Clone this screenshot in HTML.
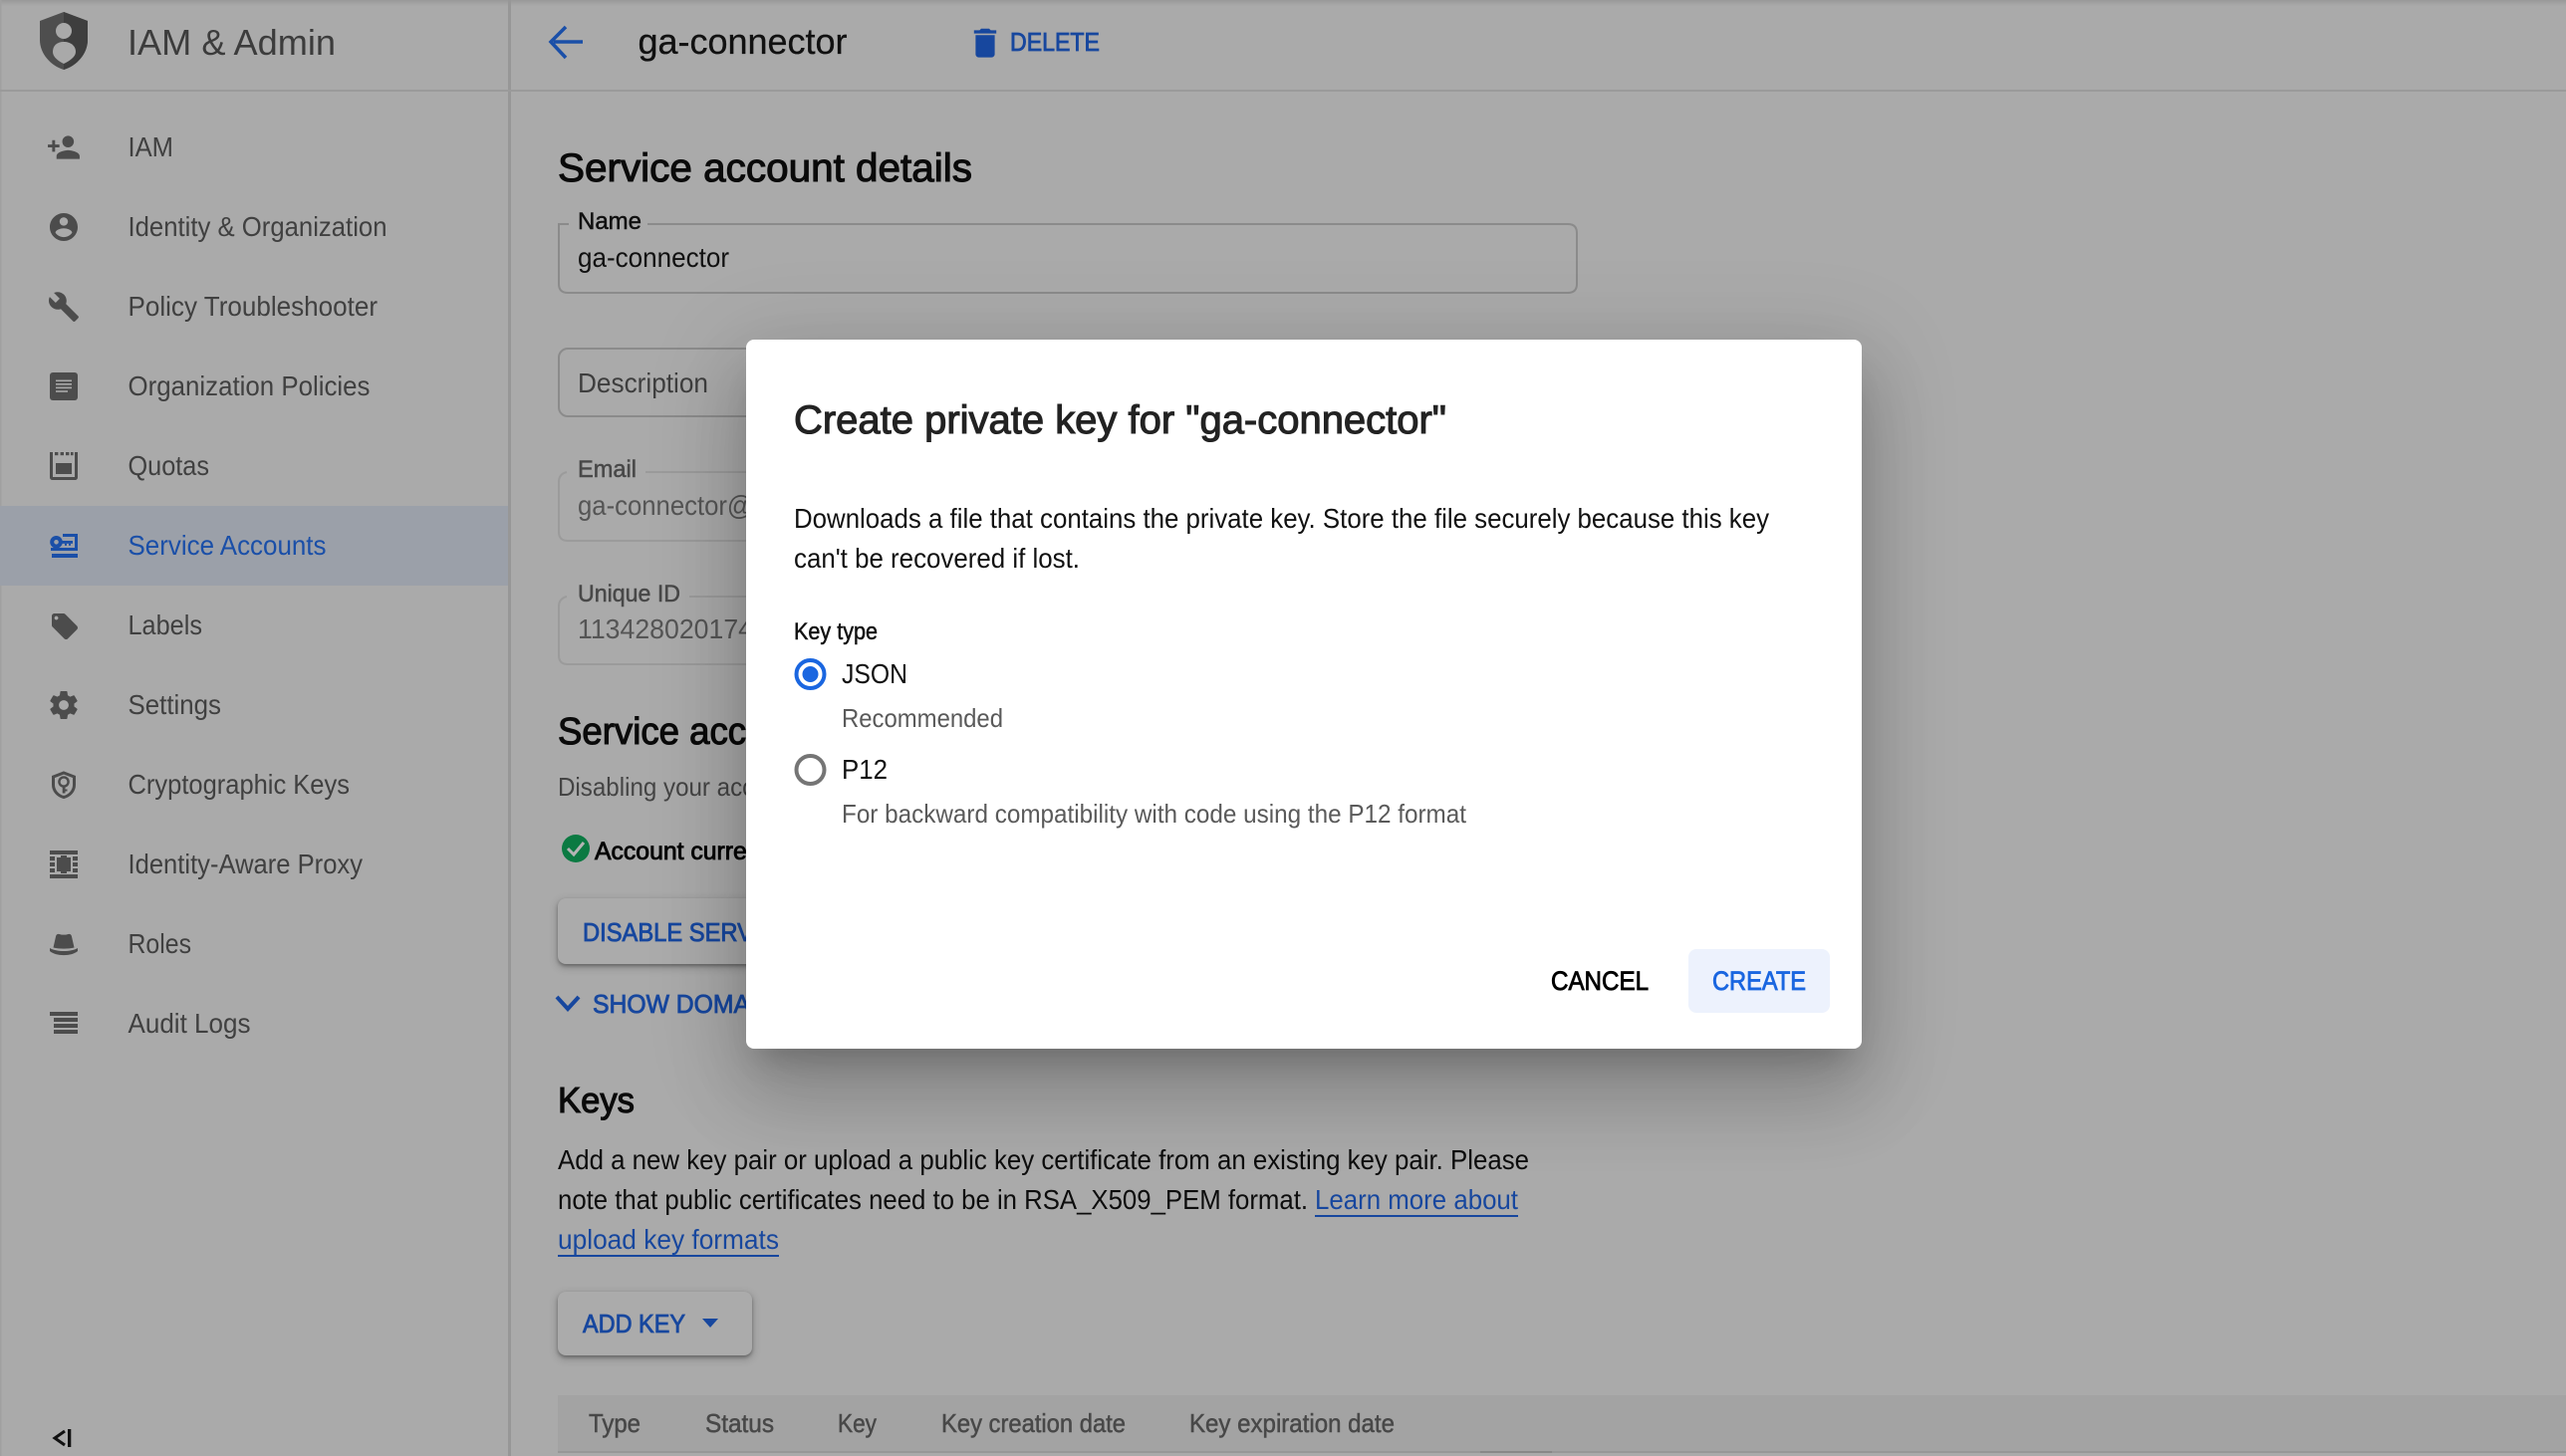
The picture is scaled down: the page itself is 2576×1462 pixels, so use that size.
<!DOCTYPE html>
<html lang="en"><head><meta charset="utf-8"><title>IAM &amp; Admin</title>
<style>
html,body{margin:0;padding:0;width:2576px;height:1462px;overflow:hidden;background:#aaaaaa}
#root{position:relative;width:2576px;height:1462px;overflow:hidden;background:#aaaaaa}
svg{position:absolute;left:0;top:0}
text{font-family:"Liberation Sans",sans-serif;white-space:pre}
.m{stroke-width:.85px;paint-order:stroke}
.l{stroke-width:.5px;paint-order:stroke}
.btn{position:absolute;background:#ababab;border-radius:8px;box-shadow:0 2px 3px rgba(0,0,0,.3),0 3px 8px 2px rgba(0,0,0,.15)}
#dlg{position:absolute;left:749px;top:341px;width:1120px;height:712px;background:#fff;border-radius:8px;box-shadow:0 22px 30px -14px rgba(0,0,0,.2),0 48px 76px 6px rgba(0,0,0,.14),0 18px 92px 16px rgba(0,0,0,.12)}
#create{position:absolute;left:1695px;top:953px;width:142px;height:64px;background:#edf2fd;border-radius:8px}
#top{position:absolute;left:0;top:0;width:2576px;height:6px;background:linear-gradient(#999,#aaa)}
</style></head><body><div id="root">
<div id="top"></div>
<div class="btn" style="left:560px;top:902px;width:400px;height:66px"></div>
<div class="btn" style="left:560px;top:1297px;width:195px;height:64px"></div>
<svg width="2576" height="1462" viewBox="0 0 2576 1462">
<!-- structure -->
<rect x="0" y="0" width="1.5" height="1462" fill="#a0a0a0"/>
<rect x="0" y="508" width="510" height="80" fill="#9ba0a9"/>
<rect x="510" y="0" width="3" height="1462" fill="#979797"/>
<rect x="0" y="90" width="2576" height="2" fill="#9a9a9a"/>

<!-- logo -->
<path d="M64 12L88 21V40C88 54 77 66 64 70C51 66 40 54 40 40V21Z" fill="#4e4e4e"/>
<path d="M64 12L88 21V40C88 54 77 66 64 70Z" fill="#3e3e3e"/>
<circle cx="64" cy="31" r="8" fill="#a9a9a9"/>
<path d="M64 42C71 42 76 46 76 52C76 57 70 61 64 64C58 61 53 57 53 52C53 46 57 42 64 42Z" fill="#a9a9a9"/>
<text x="128" y="55" font-size="36" fill="#3c3c3c" textLength="209" lengthAdjust="spacingAndGlyphs">IAM &amp; Admin</text>

<!-- nav text -->
<g font-size="28" fill="#404040">
<text x="128.500" y="157" textLength="45.500" lengthAdjust="spacingAndGlyphs">IAM</text>
<text x="128.500" y="237" textLength="260" lengthAdjust="spacingAndGlyphs">Identity &amp; Organization</text>
<text x="128.500" y="317" textLength="250.500" lengthAdjust="spacingAndGlyphs">Policy Troubleshooter</text>
<text x="128.500" y="397" textLength="243" lengthAdjust="spacingAndGlyphs">Organization Policies</text>
<text x="128.500" y="477" textLength="81.500" lengthAdjust="spacingAndGlyphs">Quotas</text>
<text x="128.500" y="557" textLength="199" lengthAdjust="spacingAndGlyphs" fill="#1a4fa8">Service Accounts</text>
<text x="128.500" y="637" textLength="74.500" lengthAdjust="spacingAndGlyphs">Labels</text>
<text x="128.500" y="717" textLength="93.500" lengthAdjust="spacingAndGlyphs">Settings</text>
<text x="128.500" y="797" textLength="222.500" lengthAdjust="spacingAndGlyphs">Cryptographic Keys</text>
<text x="128.500" y="877" textLength="235.500" lengthAdjust="spacingAndGlyphs">Identity-Aware Proxy</text>
<text x="128.500" y="957" textLength="63.500" lengthAdjust="spacingAndGlyphs">Roles</text>
<text x="128.500" y="1037" textLength="123" lengthAdjust="spacingAndGlyphs">Audit Logs</text>
</g>

<!-- nav icons -->
<g fill="#4c4c4c">
<path transform="translate(46.6 130.6) scale(1.45)" d="M15 12c2.21 0 4-1.79 4-4s-1.79-4-4-4-4 1.79-4 4 1.79 4 4 4zm-9-2V7H4v3H1v2h3v3h2v-3h3v-2H6zm9 4c-2.67 0-8 1.34-8 4v2h16v-2c0-2.66-5.33-4-8-4z"/>
<path transform="translate(47.2 211.2) scale(1.4)" d="M12 2C6.48 2 2 6.48 2 12s4.48 10 10 10 10-4.48 10-10S17.52 2 12 2zm0 3c1.66 0 3 1.34 3 3s-1.34 3-3 3-3-1.34-3-3 1.34-3 3-3zm0 14.2c-2.5 0-4.71-1.28-6-3.22.03-1.99 4-3.08 6-3.08 1.99 0 5.97 1.09 6 3.08-1.29 1.94-3.5 3.22-6 3.22z"/>
<path transform="translate(47.7 291.7) scale(1.36)" d="M22.7 19l-9.1-9.1c.9-2.3.4-5-1.5-6.9-2-2-5-2.4-7.4-1.3L9 6 6 9 1.6 4.7C.4 7.1.9 10.1 2.9 12.1c1.9 1.9 4.6 2.4 6.9 1.5l9.1 9.1c.4.4 1 .4 1.4 0l2.3-2.3c.5-.4.5-1.1.1-1.4z"/>
<!-- org policies -->
<rect x="50" y="374" width="28" height="28" rx="3"/>
<g fill="#a9a9a9"><rect x="56" y="381.5" width="16" height="1.6"/><rect x="56" y="385" width="16" height="1.6"/><rect x="56" y="388.6" width="16" height="1.6"/><rect x="56" y="392.2" width="12" height="1.6"/></g>
<!-- quotas -->
<path fill-rule="evenodd" d="M50 454H53V479H75V454H78V479C78 481 77 482 75 482H53C51 482 50 481 50 479Z"/>
<rect x="55" y="454" width="3.4" height="3.2"/><rect x="60.6" y="454" width="3.4" height="3.2"/><rect x="66" y="454" width="3.4" height="3.2"/><rect x="71" y="454" width="2.6" height="3.2"/>
<rect x="56" y="465" width="16" height="11"/>
<!-- labels -->
<path transform="translate(49.4 613.4) scale(1.3)" d="M21.41 11.58l-9-9C12.05 2.22 11.55 2 11 2H4c-1.1 0-2 .9-2 2v7c0 .55.22 1.05.59 1.42l9 9c.36.36.86.58 1.41.58s1.05-.22 1.41-.59l7-7c.37-.36.59-.86.59-1.41s-.23-1.06-.59-1.42zM5.5 7C4.67 7 4 6.33 4 5.5S4.67 4 5.5 4 7 4.67 7 5.5 6.33 7 5.5 7z"/>
<!-- settings -->
<path transform="translate(47.2 691.2) scale(1.4)" d="M19.43 12.98c.04-.32.07-.64.07-.98s-.03-.66-.07-.98l2.11-1.65c.19-.15.24-.42.12-.64l-2-3.46c-.12-.22-.39-.3-.61-.22l-2.49 1c-.52-.4-1.08-.73-1.69-.98l-.38-2.65C14.46 2.18 14.25 2 14 2h-4c-.25 0-.46.18-.49.42l-.38 2.65c-.61.25-1.17.59-1.69.98l-2.49-1c-.23-.09-.49 0-.61.22l-2 3.46c-.13.22-.07.49.12.64l2.11 1.65c-.04.32-.07.65-.07.98s.03.66.07.98l-2.11 1.65c-.19.15-.24.42-.12.64l2 3.46c.12.22.39.3.61.22l2.49-1c.52.4 1.08.73 1.69.98l.38 2.65c.03.24.24.42.49.42h4c.25 0 .46-.18.49-.42l.38-2.65c.61-.25 1.17-.59 1.69-.98l2.49 1c.23.09.49 0 .61-.22l2-3.46c.12-.22.07-.49-.12-.64l-2.11-1.65zM12 15.5c-1.93 0-3.5-1.57-3.5-3.5s1.57-3.5 3.5-3.5 3.5 1.57 3.5 3.5-1.57 3.5-3.5 3.5z"/>
<!-- crypto -->
<path d="M64 776L74.5 780V788C74.5 794 70 799 64 800.5C58 799 53.500 794 53.500 788V780Z" fill="none" stroke="#4c4c4c" stroke-width="3"/>
<circle cx="64" cy="785" r="4.6" fill="none" stroke="#4c4c4c" stroke-width="2.400"/>
<rect x="62.7" y="789" width="2.8" height="7.500"/><rect x="65" y="792.500" width="2.500" height="2"/>
<!-- IAP -->
<rect x="50" y="854" width="28" height="4"/><rect x="50" y="878" width="28" height="4"/>
<rect x="50" y="860" width="5" height="4.200"/><rect x="73" y="860" width="5" height="4.200"/>
<rect x="50" y="866" width="5" height="4"/><rect x="73" y="866" width="5" height="4"/>
<rect x="50" y="872" width="5" height="4"/><rect x="73" y="872" width="5" height="4"/>
<rect x="57" y="861" width="14" height="14"/><rect x="61" y="859" width="6" height="18"/>
<!-- roles -->
<path d="M53.500 951.500L56 940.500C56.500 938 58 937.500 60.500 938.200C62.500 938.800 65.500 938.800 67.500 938.200C70 937.500 71.500 938 72 940.500L74.500 951.500C68 953 60 953 53.500 951.500Z"/>
<path d="M50 952C57 956 71 956 78 952V955C72 960.500 56 960.500 50 955Z"/>
<!-- audit -->
<rect x="50" y="1016" width="28" height="4"/><rect x="54" y="1022" width="24" height="4"/><rect x="54" y="1028" width="24" height="4"/><rect x="54" y="1034" width="24" height="4"/>
</g>
<!-- service accounts icon -->
<g fill="#1a4fa8">
<path fill-rule="evenodd" d="M56.500 538a6.300 6.300 0 1 0 0 12.600a6.300 6.300 0 0 0 0-12.600zm0 4a2.300 2.300 0 1 1 0 4.600a2.300 2.300 0 0 1 0-4.600z"/>
<rect x="63" y="536" width="15" height="3"/><rect x="75" y="536" width="3" height="17"/><rect x="51" y="550" width="27" height="3"/>
<rect x="62" y="543" width="11" height="2.800"/><rect x="65" y="545.800" width="2" height="2"/><rect x="69" y="545.800" width="2" height="2"/>
<rect x="52" y="556" width="26" height="4"/>
</g>
<!-- collapse -->
<path d="M65 1437L55 1444L65 1451" fill="none" stroke="#111" stroke-width="3"/>
<rect x="68" y="1435" width="3.300" height="18" fill="#111"/>

<!-- header -->
<path d="M585 42H556M568 27L553 42L568 58" fill="none" stroke="#1a4fa8" stroke-width="3.500"/>
<text x="640.500" y="54" font-size="36" fill="#111" textLength="210" lengthAdjust="spacingAndGlyphs" class="l" stroke="#111" style="stroke-width:.3px">ga-connector</text>
<path transform="translate(969.800 24) scale(1.6)" fill="#17479e" d="M6 19c0 1.100.9 2 2 2h8c1.100 0 2-.9 2-2V7H6v12zM19 4h-3.500l-1-1h-5l-1 1H5v2h14V4z"/>
<text class="m" x="1014" y="51" font-size="26" fill="#17479e" stroke="#17479e" textLength="90" lengthAdjust="spacingAndGlyphs">DELETE</text>

<!-- details -->
<text class="m" x="560" y="182" font-size="40" fill="#0a0a0a" stroke="#0a0a0a" textLength="416" lengthAdjust="spacingAndGlyphs" style="stroke-width:1.1px">Service account details</text>
<path d="M571 225H561V285Q561 294 570 294H1574Q1583 294 1583 285V234Q1583 225 1574 225H650" fill="none" stroke="#8b8b8b" stroke-width="2"/>
<text class="l" x="580" y="230" font-size="24" fill="#111" stroke="#111" textLength="64" lengthAdjust="spacingAndGlyphs">Name</text>
<text x="580" y="268" font-size="28" fill="#111" textLength="152" lengthAdjust="spacingAndGlyphs">ga-connector</text>

<rect x="561" y="350" width="400" height="68" rx="9" fill="none" stroke="#8b8b8b" stroke-width="2"/>
<text x="580" y="394" font-size="28" fill="#3e3e3e" textLength="131" lengthAdjust="spacingAndGlyphs">Description</text>

<path d="M569 474Q561 476 561 484V534Q561 543 570 543H960M648 474H960" fill="none" stroke="#9b9b9b" stroke-width="2"/>
<text class="l" x="580" y="479" font-size="24" fill="#484848" stroke="#484848" textLength="59" lengthAdjust="spacingAndGlyphs">Email</text>
<text x="580" y="517" font-size="28" fill="#555" textLength="176" lengthAdjust="spacingAndGlyphs">ga-connector@</text>

<path d="M569 599Q561 601 561 609V658Q561 667 570 667H960M692 599H960" fill="none" stroke="#9b9b9b" stroke-width="2"/>
<text class="l" x="580" y="604" font-size="24" fill="#484848" stroke="#484848" textLength="103" lengthAdjust="spacingAndGlyphs">Unique ID</text>
<text x="580" y="641" font-size="28" fill="#555" textLength="176" lengthAdjust="spacingAndGlyphs">113428020174</text>

<text class="m" x="560" y="747" font-size="38" fill="#0a0a0a" stroke="#0a0a0a" textLength="368" lengthAdjust="spacingAndGlyphs" style="stroke-width:1.1px">Service account status</text>
<text x="560" y="799" font-size="26" fill="#444" textLength="318" lengthAdjust="spacingAndGlyphs">Disabling your account allows</text>
<circle cx="578" cy="852" r="14" fill="#0b7a42"/>
<path d="M570 852L576 858L586 846" fill="none" stroke="#b4b4b4" stroke-width="3"/>
<text class="m" x="597" y="863" font-size="25" fill="#050505" stroke="#050505" textLength="263" lengthAdjust="spacingAndGlyphs">Account currently active</text>
<text class="m" x="585" y="945" font-size="26" fill="#17479e" stroke="#17479e" textLength="333" lengthAdjust="spacingAndGlyphs">DISABLE SERVICE ACCOUNT</text>
<path d="M559 1001L570 1013L581 1001" fill="none" stroke="#17479e" stroke-width="4"/>
<text class="m" x="595" y="1017" font-size="26" fill="#17479e" stroke="#17479e" textLength="420" lengthAdjust="spacingAndGlyphs">SHOW DOMAIN-WIDE DELEGATION</text>

<text class="m" x="560" y="1117" font-size="36" fill="#0a0a0a" stroke="#0a0a0a" textLength="77" lengthAdjust="spacingAndGlyphs" style="stroke-width:1.1px">Keys</text>
<g font-size="28" fill="#0d0d0d">
<text x="560" y="1174" textLength="975" lengthAdjust="spacingAndGlyphs">Add a new key pair or upload a public key certificate from an existing key pair. Please</text>
<text x="560" y="1214" textLength="753" lengthAdjust="spacingAndGlyphs">note that public certificates need to be in RSA_X509_PEM format.</text>
<text x="1320" y="1214" textLength="204" lengthAdjust="spacingAndGlyphs" fill="#17479e">Learn more about</text>
<text x="560" y="1254" textLength="222" lengthAdjust="spacingAndGlyphs" fill="#17479e">upload key formats</text>
</g>
<rect x="1320" y="1220" width="204" height="2" fill="#17479e"/>
<rect x="560" y="1260" width="222" height="2" fill="#17479e"/>

<text class="m" x="585" y="1338" font-size="26" fill="#17479e" stroke="#17479e" textLength="103" lengthAdjust="spacingAndGlyphs">ADD KEY</text>
<path d="M705 1324H721L713 1333Z" fill="#17479e"/>

<rect x="560" y="1401" width="2016" height="56" fill="#a3a3a3"/>
<rect x="560" y="1457" width="2016" height="2" fill="#979797"/>
<rect x="1486" y="1457" width="72" height="2" fill="#888"/>
<g font-size="26" fill="#484848" stroke="#484848" class="l">
<text x="591" y="1438" textLength="52" lengthAdjust="spacingAndGlyphs">Type</text>
<text x="708" y="1438" textLength="69" lengthAdjust="spacingAndGlyphs">Status</text>
<text x="841" y="1438" textLength="39" lengthAdjust="spacingAndGlyphs">Key</text>
<text x="945" y="1438" textLength="185" lengthAdjust="spacingAndGlyphs">Key creation date</text>
<text x="1194" y="1438" textLength="206" lengthAdjust="spacingAndGlyphs">Key expiration date</text>
</g>
</svg>

<div id="dlg"></div>
<div id="create"></div>
<svg width="2576" height="1462" viewBox="0 0 2576 1462">
<text class="m" x="797" y="435" font-size="40" fill="#222" stroke="#222" textLength="655" lengthAdjust="spacingAndGlyphs" style="stroke-width:1.1px">Create private key for "ga-connector"</text>
<text x="797" y="530" font-size="28" fill="#111" textLength="979" lengthAdjust="spacingAndGlyphs">Downloads a file that contains the private key. Store the file securely because this key</text>
<text x="797" y="570" font-size="28" fill="#111" textLength="287" lengthAdjust="spacingAndGlyphs">can't be recovered if lost.</text>
<text class="l" x="797" y="642" font-size="24" fill="#111" stroke="#111" textLength="84" lengthAdjust="spacingAndGlyphs">Key type</text>
<circle cx="813.500" cy="677" r="14" fill="none" stroke="#1a66e0" stroke-width="4"/>
<circle cx="813.500" cy="677" r="8" fill="#1a66e0"/>
<text x="845" y="686" font-size="28" fill="#111" textLength="66" lengthAdjust="spacingAndGlyphs">JSON</text>
<text x="845" y="730" font-size="26" fill="#5a5a5a" textLength="162" lengthAdjust="spacingAndGlyphs">Recommended</text>
<circle cx="813.500" cy="773" r="14" fill="none" stroke="#757575" stroke-width="4"/>
<text x="845" y="782" font-size="28" fill="#111" textLength="46" lengthAdjust="spacingAndGlyphs">P12</text>
<text x="845" y="826" font-size="26" fill="#5a5a5a" textLength="627" lengthAdjust="spacingAndGlyphs">For backward compatibility with code using the P12 format</text>
<text class="m" x="1557" y="994" font-size="27" fill="#000" stroke="#000" textLength="98" lengthAdjust="spacingAndGlyphs">CANCEL</text>
<text class="m" x="1719" y="994" font-size="27" fill="#1a66e0" stroke="#1a66e0" textLength="94" lengthAdjust="spacingAndGlyphs">CREATE</text>
</svg>
</div></body></html>
